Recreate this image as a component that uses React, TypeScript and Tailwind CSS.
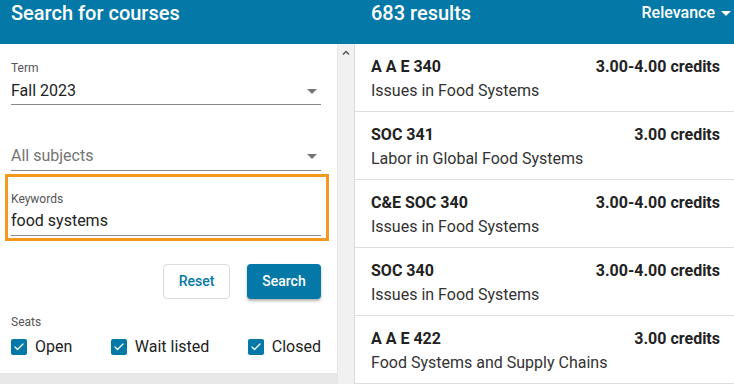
import { Check } from "lucide-react";

const courses = [
  { code: "A A E 340", credits: "3.00-4.00 credits", title: "Issues in Food Systems" },
  { code: "SOC 341", credits: "3.00 credits", title: "Labor in Global Food Systems" },
  { code: "C&E SOC 340", credits: "3.00-4.00 credits", title: "Issues in Food Systems" },
  { code: "SOC 340", credits: "3.00-4.00 credits", title: "Issues in Food Systems" },
  { code: "A A E 422", credits: "3.00 credits", title: "Food Systems and Supply Chains" },
];

function Caret({ className }: { className?: string }) {
  return (
    <svg width="10" height="5" viewBox="0 0 10 5" className={className}>
      <path d="M0 0h10L5 5z" fill="currentColor" />
    </svg>
  );
}

function SeatBox({ label }: { label: string }) {
  return (
    <label className="flex items-center gap-2">
      <span className="w-4 h-4 rounded-[2px] bg-[#0479a8] flex items-center justify-center">
        <Check size={12} strokeWidth={2.5} className="text-white" />
      </span>
      <span className="text-[16px] text-[#222]">{label}</span>
    </label>
  );
}

export default function App() {
  return (
    <div className="w-[734px] h-[384px] overflow-hidden bg-white" style={{ fontFamily: "Roboto, 'Liberation Sans', sans-serif" }}>
      {/* top bar */}
      <div className="h-[44px] bg-[#0479a8] flex text-white">
        <div className="w-[354px] pl-[11px] pt-[1px] text-[20px] font-medium leading-[24px]">Search for courses</div>
        <div className="flex-1 flex justify-between pl-[17px] pr-[3px] pt-[1px]">
          <span className="text-[20px] font-medium leading-[24px]">683 results</span>
          <span className="flex items-center gap-[6px] h-[24px] text-[16px] font-medium">
            Relevance
            <Caret />
          </span>
        </div>
      </div>

      <div className="flex h-[340px]">
        {/* filters */}
        <div className="w-[337px] flex flex-col bg-[#e8e8e8]">
          <div className="bg-white h-[329px] pl-[11px] pr-[16px]">
            <div className="pt-[16px]">
              <div className="text-[12px] leading-[16px] text-[#555]">Term</div>
              <div className="mt-[3px] pb-[1px] border-b border-[#8a8a8a] flex items-center justify-between pr-[4px]">
                <span className="text-[16px] leading-[24px] text-[#222]">Fall 2023</span>
                <Caret className="text-[#757575]" />
              </div>
            </div>

            <div className="mt-[39px] pb-[2px] border-b border-[#8a8a8a] flex items-center justify-between pr-[4px]">
              <span className="text-[16px] leading-[24px] text-[#757575]">All subjects</span>
              <Caret className="text-[#757575]" />
            </div>

            <div className="mt-[3px] -ml-[6px] -mr-[8px] border-[3px] border-[#f5981f] h-[67px] pl-[3px] pr-[5px] pt-[14px]">
              <div className="text-[12px] leading-[16px] text-[#555]">Keywords</div>
              <div className="mt-[2px] pb-[2px] border-b border-[#8a8a8a] text-[16px] leading-[24px] text-[#222]">food systems</div>
            </div>

            <div className="mt-[23px] flex justify-end gap-[17px]">
              <button className="w-[67px] h-[35px] rounded-[4px] border border-[#dcdcdc] bg-white text-[14px] font-medium text-[#0479a8]">Reset</button>
              <button className="w-[74px] h-[35px] rounded-[4px] bg-[#0479a8] text-[14px] font-medium text-white shadow-[0_2px_3px_rgba(0,0,0,0.3)]">Search</button>
            </div>

            <div className="mt-[15px] text-[12px] leading-[16px] text-[#555]">Seats</div>
            <div className="mt-[5px] flex justify-between">
              <SeatBox label="Open" />
              <SeatBox label="Wait listed" />
              <SeatBox label="Closed" />
            </div>
          </div>
        </div>

        {/* scrollbar */}
        <div className="w-[17px] bg-[#f1f1f1] border-l border-[#e6e6e6] flex justify-center pt-[6px]">
          <svg width="8" height="5" viewBox="0 0 8 5">
            <path d="M1 4.5 4 1.5 7 4.5" stroke="#555" strokeWidth="1.5" fill="none" />
          </svg>
        </div>

        {/* results */}
        <div className="flex-1 border-l border-[#dcdcdc]">
          {courses.map((c, i) => (
            <div key={i} className="h-[68px] border-b border-[#dcdcdc] pl-[16px] pr-[14px] pt-[12px]">
              <div className="flex justify-between text-[16px] font-bold leading-[22px] text-[#222]">
                <span>{c.code}</span>
                <span>{c.credits}</span>
              </div>
              <div className="mt-[2px] text-[16px] leading-[22px] text-[#333]">{c.title}</div>
            </div>
          ))}
        </div>
      </div>
    </div>
  );
}
